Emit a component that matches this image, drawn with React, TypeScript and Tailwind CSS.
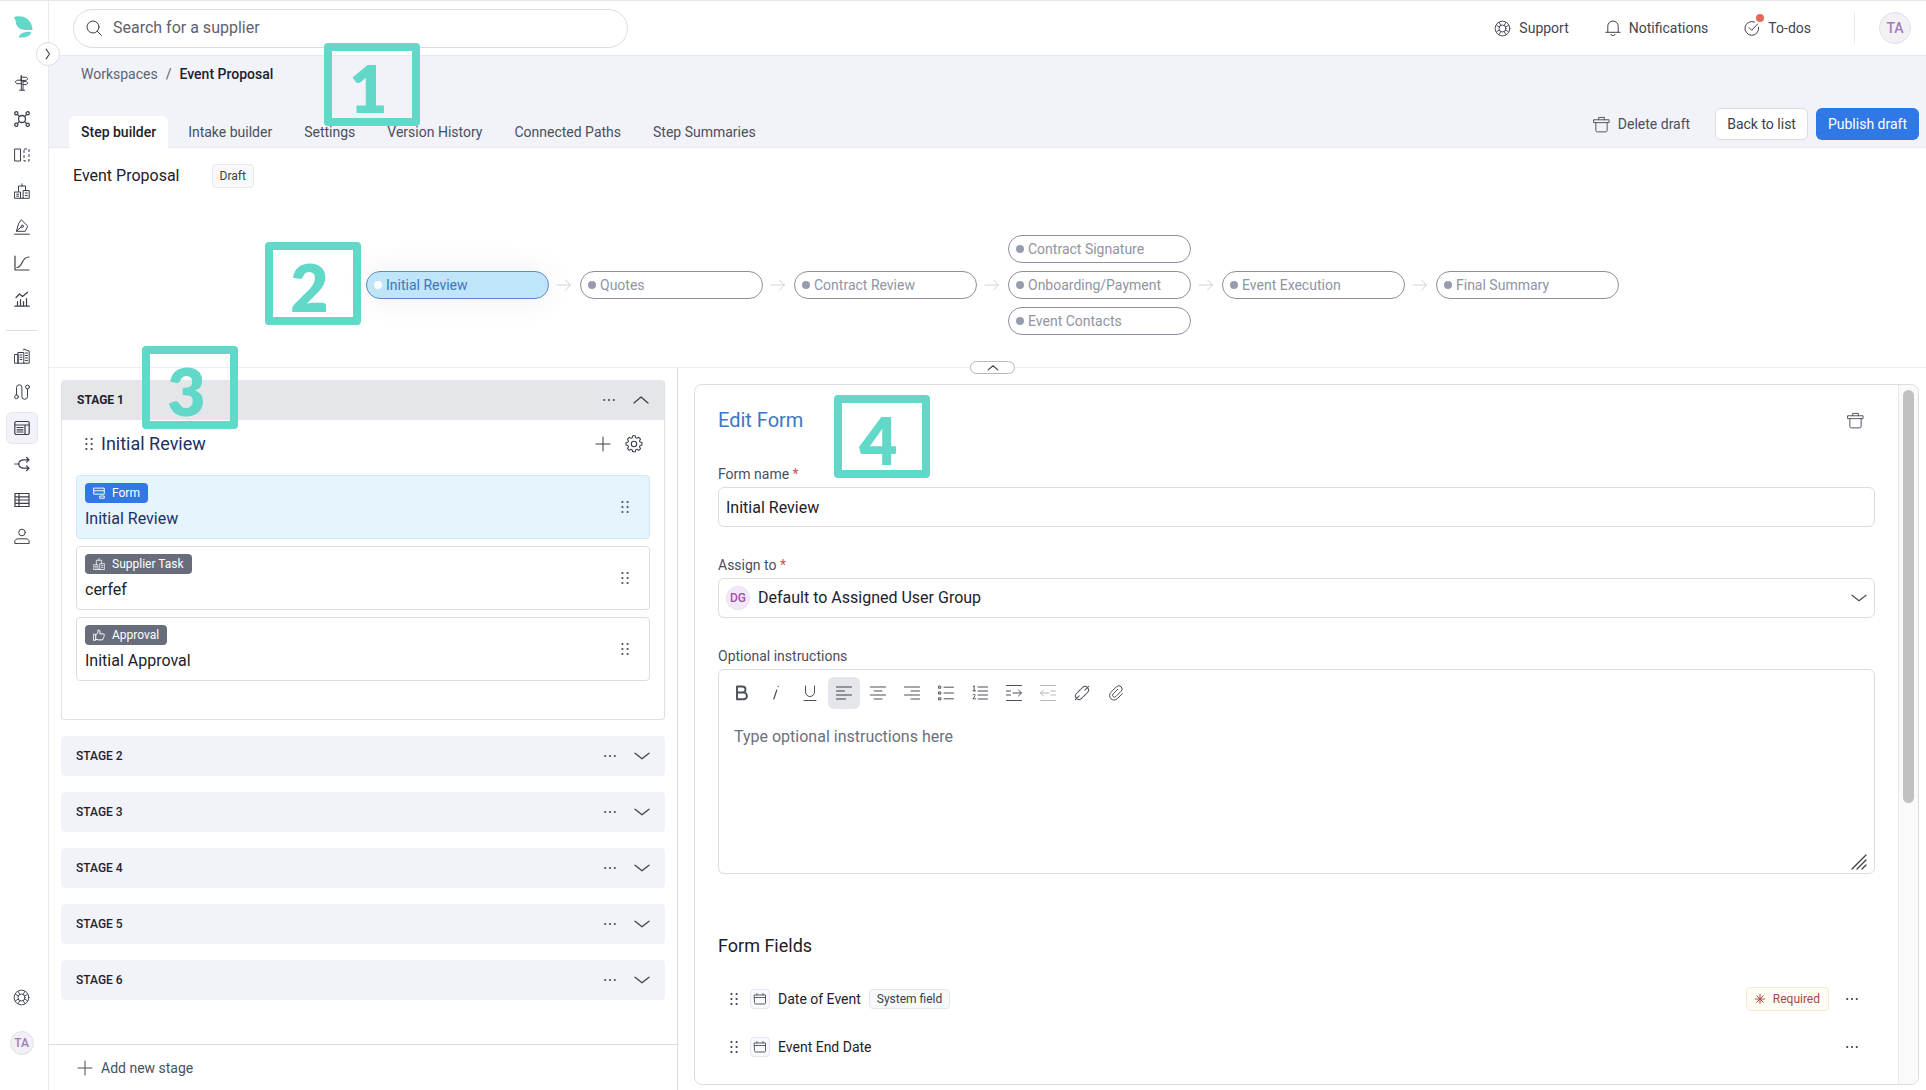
import type { ReactNode } from "react";

type IconProps = { className?: string };

function Svg({ className = "size-4", children, box = "0 0 16 16" }: { className?: string; children: ReactNode; box?: string }) {
  return (
    <svg viewBox={box} className={`shrink-0 ${className}`} fill="none" stroke="currentColor" strokeLinecap="round" strokeLinejoin="round" aria-hidden="true">
      {children}
    </svg>
  );
}

const SearchIcon = () => (
  <Svg>
    <circle cx="7" cy="7" r="6" />
    <path d="M11.4 11.4 15.3 15.3" />
  </Svg>
);
const LifebuoyIcon = () => (
  <Svg className="size-[17px]" box="0 0 18 18">
    <circle cx="9" cy="9" r="7.8" />
    <circle cx="9" cy="9" r="3.7" />
    <path d="M2.8 5.6 5.6 7.4M5.4 2.6 7.2 5.6M12.6 2.6 10.8 5.6M15.2 5.6 12.4 7.4M2.8 12.4 5.6 10.6M5.4 15.4 7.2 12.4M12.6 15.4 10.8 12.4M15.2 12.4 12.4 10.6" />
  </Svg>
);
const BellIcon = () => (
  <Svg>
    <path d="M.8 12.3h14.4M2.8 12.2V6.2a5.2 5.2 0 0 1 10.4 0v6M6 14.4a2.1 2.1 0 0 0 4 0" />
  </Svg>
);
const TodoIcon = () => (
  <Svg>
    <path d="M10.5 2A6.9 6.9 0 1 0 14.6 7M5 7.6l2.7 2.7L13.6 4" />
  </Svg>
);
const TrashIcon = () => (
  <Svg className="size-[17px]" box="0 0 18 18">
    <path d="M1 4h16v3H1zM6 4V1.5h6V4M3 7v8.3c0 .9.6 1.5 1.5 1.5h9c.9 0 1.5-.6 1.5-1.5V7" />
  </Svg>
);
const PlusIcon = () => (
  <Svg>
    <path d="M8 1v14M1 8h14" />
  </Svg>
);
const GearIcon = () => (
  <Svg className="size-[18px]" box="0 0 24 24">
    <path
      strokeWidth="1.5"
      d="M10.2 1.8h3.6l.6 2.7 1.9.8 2.3-1.5 2.6 2.6-1.5 2.3.8 1.9 2.7.6v3.6l-2.7.6-.8 1.9 1.5 2.3-2.6 2.6-2.3-1.5-1.9.8-.6 2.7h-3.6l-.6-2.7-1.9-.8-2.3 1.5-2.6-2.6 1.5-2.3-.8-1.9-2.7-.6v-3.6l2.7-.6.8-1.9-1.5-2.3 2.6-2.6 2.3 1.5 1.9-.8z"
      transform="translate(.6 -.6) scale(.95)"
    />
    <circle cx="12" cy="12" r="3.6" strokeWidth="1.5" />
  </Svg>
);
const GripIcon = () => (
  <svg viewBox="0 0 8 14" className="h-3.5 w-2 shrink-0" fill="currentColor" aria-hidden="true">
    {[2, 7, 12].map((y) => (
      <g key={y}>
        <circle cx="1.4" cy={y} r="1.1" />
        <circle cx="6.6" cy={y} r="1.1" />
      </g>
    ))}
  </svg>
);
const DotsIcon = () => (
  <svg viewBox="0 0 14 4" className="h-1 w-3.5 shrink-0" fill="currentColor" aria-hidden="true">
    <circle cx="2.2" cy="2" r="1.1" />
    <circle cx="7" cy="2" r="1.1" />
    <circle cx="11.8" cy="2" r="1.1" />
  </svg>
);
const ChevronIcon = ({ up = false }: { up?: boolean }) => (
  <Svg>
    <path strokeWidth="1.2" d={up ? "M1 11l7-6 7 6" : "M1 5.200l7 5.600 7-5.600"} />
  </Svg>
);

const SignpostIcon = () => (
  <Svg>
    <path d="M7.3.8v1.4h5l1.5 1.6-1.5 1.6H7.3zM7.3 5.4v1.2M7.3 5.2H3L1.2 7 3 8.7h4.3M7.3 2.2v12.8M9 5.4V15M5.6 15.2h5M9 6.6h3.4l1.4 1.5-1.4 1.5H9" />
  </Svg>
);
const NetworkIcon = () => (
  <Svg>
    <g strokeWidth="1.3">
      <circle cx="8" cy="8" r="3.5" />
      <circle cx="2.3" cy="2.3" r="1.6" />
      <circle cx="13.7" cy="2.3" r="1.6" />
      <circle cx="2.3" cy="13.7" r="1.6" />
      <circle cx="13.7" cy="13.7" r="1.6" />
      <path d="M3.6 3.6l1.8 1.8M12.4 3.6l-1.8 1.8M3.6 12.4l1.8-1.8M12.4 12.4l-1.8-1.8" />
    </g>
  </Svg>
);
const ColumnsIcon = () => (
  <Svg>
    <path d="M1 2h5.5v12H1z" />
    <path strokeLinecap="butt" strokeDasharray="3 2" d="M10 2h5v12h-5z" />
  </Svg>
);
const OfficesIcon = ({ className }: IconProps) => (
  <Svg className={className}>
    <path d="M.8 9h5.7v6.3H.8zM9.5 7.500h5.700v7.800H9.500zM4.500 8.500V3h7v4M8 3V.8M2.600 11.200h2M2.600 13.200h2M11.300 10h2M11.300 12.500h2M6.500 15.300h3" />
  </Svg>
);
const PenIcon = () => (
  <Svg>
    <path d="M7.500 1 13.800 7.200 11.200 12.300H2.400L4.500 5zM2.600 12 7.600 7.700M.6 15.200h14.800" />
    <circle cx="8.300" cy="7.300" r="1.200" />
  </Svg>
);
const CurveIcon = () => (
  <Svg>
    <path strokeWidth="1.200" d="M1 1v14h14M3 12.500c6 0 4-10.500 12-10.500" />
  </Svg>
);
const TrendIcon = () => (
  <Svg>
    <path strokeWidth="1.200" d="M.8 15.200h14.400M3.500 15V10.500M6.500 15V8.500M9.500 15v-4.500M12.500 15V7.500M2 6.500 5.500 3l3 2.500L13.500 1.200" />
  </Svg>
);
const CityIcon = () => (
  <Svg>
    <path d="M.8 6.500h3.400v8.700H.8zM4.200 4.500h5.600v10.700H4.200zM9.800 2v-1l5.400 2.200v12H9.800M6 7h2M6 9.300h2M6 11.600h2M11.500 5h2M11.500 7.500h2M11.500 10h2M11.500 12.500h2" />
  </Svg>
);
const RouteIcon = () => (
  <Svg>
    <circle cx="2.500" cy="12.800" r="1.900" />
    <circle cx="13.500" cy="3" r="1.900" />
    <path d="M2.500 10.800V3.500a2.700 2.700 0 0 1 5.400 0v9a2.700 2.700 0 0 0 5.600 0V5" />
  </Svg>
);
const FormPageIcon = () => (
  <Svg>
    <path
      strokeWidth="1.200"
      d="M2.200 1.500h11.600c.8 0 1.400.6 1.400 1.400v10.200c0 .8-.6 1.400-1.400 1.400H2.200c-.8 0-1.400-.6-1.400-1.400V2.900c0-.8.600-1.400 1.400-1.400zM1 5h14M11 5v9.500M3 7.500h6M3 9.800h6M3 12h6"
    />
  </Svg>
);
const SplitIcon = () => (
  <Svg>
    <path strokeWidth="1.200" d="M.8 8h4M14.800 3.800H10C6.500 3.800 4.800 5.500 4.800 8s1.700 4.200 5.200 4.200h4.800M12.600 1.500 15 3.800l-2.400 2.300M12.600 9.900l2.400 2.300-2.400 2.300" />
  </Svg>
);
const TableIcon = () => (
  <Svg>
    <path strokeWidth="1.200" d="M1 1.500h14v13H1zM1 4.800h14M1 8h14M1 11.300h14M5 1.500v13" />
  </Svg>
);
const PersonIcon = () => (
  <Svg>
    <circle cx="8" cy="4.500" r="3.300" />
    <path d="M.8 15.200v-1.400c0-2 1.600-3 3.400-3h7.600c1.800 0 3.400 1 3.400 3v1.400z" />
  </Svg>
);

const FormBadgeIcon = () => (
  <Svg className="size-3">
    <path strokeWidth="1.3" d="M1 1.500h14v3.500H1zM1 5v4.500h14V5M9.500 12h5.500v3H9.500z" />
  </Svg>
);
const ThumbIcon = () => (
  <Svg className="size-3">
    <path strokeWidth="1.3" d="M1 7h2.600v8H1zM3.600 8.500C6 7 6.600 5 6.600 1.500c2.600-.8 3.600 2 2.400 5h5c1.500 0 1.400 1.700.6 2.200.6.800.3 1.800-.4 2.200.3.800 0 1.600-.7 1.900.1 1-.6 1.700-1.500 1.700H7c-1.300 0-2-.8-3.400-.8" />
  </Svg>
);
const CalendarIcon = () => (
  <Svg className="size-3.5" box="0 0 14 14">
    <path d="M1.500 3h11v8c0 .6-.4 1-1 1h-9c-.6 0-1-.4-1-1zM1.500 5.500h11M4 1.500V3M10 1.500V3" strokeWidth=".9" />
  </Svg>
);
const AsteriskIcon = () => (
  <Svg className="size-2.5" box="0 0 10 10">
    <path d="M5 .5v9M.5 5h9M1.800 1.800l6.400 6.400M8.200 1.800 1.800 8.200" />
  </Svg>
);
const ArrowIcon = () => (
  <Svg className="size-4 text-[#d0d3da]">
    <path d="M1 8h13.500M9.500 3l5 5-5 5" />
  </Svg>
);

const NAV_TOP = [
  { label: "Paths", icon: <SignpostIcon /> },
  { label: "Network", icon: <NetworkIcon /> },
  { label: "Compare", icon: <ColumnsIcon /> },
  { label: "Suppliers", icon: <OfficesIcon /> },
  { label: "Contracts", icon: <PenIcon /> },
  { label: "Performance", icon: <CurveIcon /> },
  { label: "Reports", icon: <TrendIcon /> },
];
const NAV_BOTTOM = [
  { label: "Company", icon: <CityIcon /> },
  { label: "Journeys", icon: <RouteIcon /> },
  { label: "Workspaces", icon: <FormPageIcon />, active: true },
  { label: "Rules", icon: <SplitIcon /> },
  { label: "Tables", icon: <TableIcon /> },
  { label: "Users", icon: <PersonIcon /> },
];

function NavButton({ label, icon, active = false }: { label: string; icon: ReactNode; active?: boolean }) {
  return (
    <button
      type="button"
      aria-label={label}
      className={`flex size-8 items-center justify-center rounded-md border text-[#3a3f4c] ${active ? "border-[#e6e8f0] bg-[#f2f3f8]" : "border-transparent"}`}
    >
      {icon}
    </button>
  );
}

function Sidebar() {
  return (
    <nav aria-label="Main" className="relative flex w-[49px] shrink-0 flex-col border-r border-[#e8e9ee] pr-[5px]">
      <svg viewBox="0 0 20 22" className="mt-[15px] ml-3.5 h-[22px] w-5" fill="#62d8c8" aria-label="Logo">
        <path d="M0 1.200C5-1 17 0 18.500 13c0 .7-.3 1-1 1-7 .4-12-.3-14.500-4C1.500 7.300 2.200 4 0 1.200z" />
        <path d="M17.500 15.800c-1.800 5-6.500 6.200-12.800 5.600C6 17 10 15.600 17.500 15.800z" />
      </svg>
      <button
        type="button"
        aria-label="Expand menu"
        className="absolute top-[41px] -right-3 z-10 flex size-6 items-center justify-center rounded-full border border-[#dcdde2] bg-white text-[#3a3f4c]"
      >
        <Svg className="size-3">
          <path strokeWidth="1.400" d="M5.500 1.500l4.500 6.500-4.500 6.500" />
        </Svg>
      </button>
      <div className="mt-[29px] flex flex-col items-center gap-1">
        {NAV_TOP.map((n) => (
          <NavButton key={n.label} {...n} />
        ))}
      </div>
      <hr className="mx-1.5 mt-[15px] mb-[9px] border-[#dcdde2]" />
      <div className="flex flex-col items-center gap-1">
        {NAV_BOTTOM.map((n) => (
          <NavButton key={n.label} {...n} />
        ))}
      </div>
      <div className="mt-auto mb-[35px] flex flex-col items-center gap-[18px]">
        <NavButton label="Help" icon={<LifebuoyIcon />} />
        <span className="flex size-6 items-center justify-center rounded-full border border-[#e3e0e8] bg-[#f1f0f4] text-xs font-medium text-[#a07cb5]">TA</span>
      </div>
    </nav>
  );
}

function Callout({ n, className }: { n: number; className: string }) {
  return (
    <div
      className={`pointer-events-none absolute z-20 flex h-[83px] w-24 items-center justify-center rounded border-8 border-[#62d8c8] pt-[7px] pr-[7px] font-[Lato,sans-serif] text-[66px] leading-none font-extrabold text-[#62d8c8] ${className}`}
    >
      {n}
    </div>
  );
}

function TopBar() {
  return (
    <header className="flex h-[55px] items-center justify-between border-b border-[#e8e9ee] pr-[15px] pl-6">
      <label className="flex h-[39px] w-[555px] items-center gap-[11px] rounded-full border border-[#dcdde2] px-3 text-[#3a3f4c]">
        <SearchIcon />
        <input type="search" aria-label="Search for a supplier" placeholder="Search for a supplier" className="min-w-0 flex-1 bg-transparent text-base outline-none placeholder:text-[#5d6270]" />
      </label>
      <div className="flex items-center text-sm text-[#3f4451]">
        <div className="flex items-center gap-9">
          <button type="button" className="flex items-center gap-2">
            <LifebuoyIcon />
            Support
          </button>
          <button type="button" className="flex items-center gap-2">
            <BellIcon />
            Notifications
          </button>
          <button type="button" className="flex items-center gap-2">
            <span className="relative">
              <TodoIcon />
              <span className="absolute -top-1.5 -right-1 size-2 rounded-full bg-[#e8695c]" />
            </span>
            To-dos
          </button>
        </div>
        <span className="mr-6 ml-[43px] h-8 w-px bg-[#e8e9ee]" />
        <span className="flex size-8 items-center justify-center rounded-full border border-[#e3e0e8] bg-[#f4f1f6] font-medium text-[#a07cb5]">TA</span>
      </div>
    </header>
  );
}

const TABS = ["Step builder", "Intake builder", "Settings", "Version History", "Connected Paths", "Step Summaries"];

function PageHeader() {
  return (
    <div className="relative flex justify-between border-b border-[#e8e9ee] bg-[#f2f3f8] pr-[7px] pl-5 text-sm">
      <div>
        <nav aria-label="Breadcrumb" className="flex gap-2 px-3 pt-2 text-[#5d6270]">
          <a href="#workspaces">Workspaces</a>
          <span>/</span>
          <span className="font-medium text-[#1d212b]">Event Proposal</span>
        </nav>
        <div role="tablist" className="-mb-px mt-8 flex gap-2">
          {TABS.map((t, i) => (
            <button
              key={t}
              type="button"
              role="tab"
              aria-selected={i === 0}
              className={`h-8 rounded-t-md px-3 ${i === 0 ? "bg-white font-medium text-[#1d212b]" : "text-[#4a4f5c]"}`}
            >
              {t}
            </button>
          ))}
        </div>
      </div>
      <div className="mb-[7px] flex items-center gap-2 self-end">
        <button type="button" className="mr-[17px] flex items-center gap-2 text-[#4a4f5c]">
          <TrashIcon />
          Delete draft
        </button>
        <button type="button" className="h-8 rounded-md border border-[#dcdde2] bg-white px-[11px] text-[#3a3f4c]">
          Back to list
        </button>
        <button type="button" className="h-8 rounded-md bg-[#2f78e6] px-3 text-white">
          Publish draft
        </button>
      </div>
      <Callout n={1} className="top-[-13px] left-[275px]" />
    </div>
  );
}

const FLOW = [["Initial Review"], ["Quotes"], ["Contract Review"], ["Contract Signature", "Onboarding/Payment", "Event Contacts"], ["Event Execution"], ["Final Summary"]];

function Flow() {
  return (
    <section aria-label="Stages overview" className="relative border-b border-[#efeff3]">
      <div className="flex items-center gap-8 pt-4 pl-6">
        <h1 className="text-base text-[#1d212b]">Event Proposal</h1>
        <span className="rounded border border-[#e8e9ee] bg-[#f8f9fb] px-[7px] py-[3px] text-xs text-[#3a3f4c]">Draft</span>
      </div>
      <ol className="flex items-center justify-center gap-2 pt-[47px] pb-8 pl-[10px]">
        {FLOW.map((col, i) => (
          <li key={col[0]} className="flex items-center gap-[7px]">
            <div className="relative flex flex-col gap-2">
              {col.map((label) => (
                <button
                  key={label}
                  type="button"
                  className={`flex h-7 w-[183px] items-center gap-1 rounded-full border px-[7px] text-sm ${
                    i === 0 ? "border-[#5a8dc8] bg-[#c0e4f8] text-[#3a78bd] shadow-[0_0_32px_rgba(0,0,0,0.07)]" : "border-[#8b909d] bg-white text-[#8f95a3]"
                  }`}
                >
                  <span className={`size-2 rounded-full ${i === 0 ? "bg-white" : "bg-[#979dae]"}`} />
                  {label}
                </button>
              ))}
              {i === 0 && <Callout n={2} className="-top-[29px] -left-[101px]" />}
            </div>
            {i < FLOW.length - 1 && <ArrowIcon />}
          </li>
        ))}
      </ol>
      <div className="absolute inset-x-0 -bottom-[7px] flex justify-center pl-[10px]">
        <button type="button" aria-label="Collapse overview" className="flex h-[13px] w-[45px] items-center justify-center rounded-full border border-[#b5b8c0] bg-white text-[#3a3f4c]">
          <Svg className="size-3">
            <path strokeWidth="1.500" d="M1.500 10.500 8 5l6.500 5.500" />
          </Svg>
        </button>
      </div>
    </section>
  );
}

const STEPS = [
  { kind: "Form", name: "Initial Review", icon: <FormBadgeIcon />, active: true },
  { kind: "Supplier Task", name: "cerfef", icon: <OfficesIcon className="size-3" />, active: false },
  { kind: "Approval", name: "Initial Approval", icon: <ThumbIcon />, active: false },
];

function StageHeader({ n, open = false }: { n: number; open?: boolean }) {
  return (
    <div className={`flex h-10 items-center px-[15px] text-xs text-[#1d212b] ${open ? "rounded-t bg-[#e5e6ea] font-bold" : "rounded bg-[#f2f3f8] font-medium"}`}>
      <h2 className="flex-1">STAGE {n}</h2>
      <button type="button" aria-label={`Stage ${n} options`} className="mr-[17px] flex h-6 items-center text-[#4a4f5c]">
        <DotsIcon />
      </button>
      <button type="button" aria-label={`Toggle stage ${n}`} aria-expanded={open} className="flex h-6 items-center text-[#3a3f4c]">
        <ChevronIcon up={open} />
      </button>
    </div>
  );
}

function StagePanel() {
  return (
    <aside className="flex w-[629px] shrink-0 flex-col border-r border-[#dcdde2]">
      <div className="flex flex-1 flex-col gap-4 pt-3 pr-3 pl-3">
        <section className="relative rounded border border-t-0 border-[#e0e1e6]">
          <StageHeader n={1} open />
          <div className="flex items-center gap-2 px-[15px] pt-2.5 pl-[23px] text-[#3a3f4c]">
            <GripIcon />
            <h3 className="flex-1 text-lg text-[#22305f]">Initial Review</h3>
            <button type="button" aria-label="Add step" className="mr-1.5">
              <PlusIcon />
            </button>
            <button type="button" aria-label="Stage settings" className="mr-1.5">
              <GearIcon />
            </button>
          </div>
          <ul className="flex flex-col gap-[7px] px-[14px] pt-[17px] pb-[38px]">
            {STEPS.map((s) => (
              <li key={s.name} className={`flex h-16 items-center justify-between rounded border pr-5 pl-2 ${s.active ? "border-[#cfe8f5] bg-[#e6f4fd]" : "border-[#dcdde2] bg-white"}`}>
                <div className="flex flex-col items-start">
                  <span className={`flex h-5 items-center gap-[7px] rounded px-2 text-xs text-white ${s.active ? "bg-[#2f78e6]" : "bg-[#686d7c]"}`}>
                    {s.icon}
                    {s.kind}
                  </span>
                  <span className={`mt-1 text-base ${s.active ? "text-[#22305f]" : "text-[#1d212b]"}`}>{s.name}</span>
                </div>
                <span className="text-[#4a4f5c]">
                  <GripIcon />
                </span>
              </li>
            ))}
          </ul>
          <Callout n={3} className="-top-[34px] left-[80px]" />
        </section>
        {[2, 3, 4, 5, 6].map((n) => (
          <StageHeader key={n} n={n} />
        ))}
      </div>
      <div className="flex h-[46px] items-center border-t border-[#dcdde2] px-7">
        <button type="button" className="flex items-center gap-2 text-sm text-[#4a4f5c]">
          <PlusIcon />
          Add new stage
        </button>
      </div>
    </aside>
  );
}

const lines = (d: string) => (
  <Svg>
    <path d={d} />
  </Svg>
);
const TOOLS: { label: string; icon: ReactNode; state?: "on" | "off" }[] = [
  {
    label: "Bold",
    icon: (
      <Svg>
        <path strokeWidth="1.900" d="M3 1.500h5.500a3 3 0 0 1 0 6H3zM3 7.500h6.500a3.400 3.400 0 0 1 0 6.800H3z" />
      </Svg>
    ),
  },
  {
    label: "Italic",
    icon: (
      <Svg>
        <path d="M8.800 5 5.800 14M10.200 1.300v.3" strokeWidth="1.200" />
      </Svg>
    ),
  },
  { label: "Underline", icon: lines("M3.500 1v6a4.500 4.500 0 0 0 9 0V1M2 15.500h12") },
  { label: "Align left", icon: lines("M.5 2h15M.5 6h8M.5 10h15M.5 14h9"), state: "on" },
  { label: "Align center", icon: lines("M.5 2h15M4 6h8M.5 10h15M4 14h8") },
  { label: "Align right", icon: lines("M.5 2h15M7 6h8.500M.5 10h15M7 14h8.500") },
  { label: "Bulleted list", icon: lines("M6 2.200h9.500M6 8h9.500M6 13.800h9.500M.8 1.200h2v2h-2zM.8 7h2v2h-2zM.8 12.800h2v2h-2z") },
  { label: "Numbered list", icon: lines("M6 2h9.500M6 6h9.500M6 10h9.500M6 14h9.500M1.200 1.500l1-.7v5M1 5.800h2.400M1 9.800c1.200-1 2.400-.2 2 .9L1 13.800h2.500") },
  { label: "Increase indent", icon: lines("M.5 .5h15M.5 15.500h15M.5 6h4M.5 10h4M7 8h8.500M12.500 5l3 3-3 3") },
  { label: "Decrease indent", icon: lines("M.5 .5h15M.5 15.500h15M11 6h4.500M11 10h4.500M.5 8H9M3.500 5l-3 3 3 3"), state: "off" },
  {
    label: "Link",
    icon: (
      <Svg>
        <g transform="rotate(-45 8 8)">
          <path d="M9.500 4.500H3.800a3.500 3.500 0 0 0 0 7h1.700M6.500 11.500h5.700a3.500 3.500 0 0 0 0-7h-1.700M-1.500 8H4M12 8h5.500" />
        </g>
      </Svg>
    ),
  },
  { label: "Attach", icon: lines("M14.500 8.500 9.300 13.700a4.500 4.500 0 0 1-6.400-6.400l5.600-5.600a3.200 3.200 0 0 1 4.600 4.600L7.800 11.600a1.900 1.900 0 0 1-2.700-2.700L9.700 4.300") },
];

function FieldRow({ name, system = false, required = false }: { name: string; system?: boolean; required?: boolean }) {
  return (
    <li className="flex h-12 items-center pr-4 pl-3 text-sm text-[#1d212b]">
      <span className="mr-3 text-[#3a3f4c]">
        <GripIcon />
      </span>
      <span className="mr-2 flex size-5 items-center justify-center rounded border border-[#e3e6ee] bg-[#f8f9fb] text-[#4a4f5c]">
        <CalendarIcon />
      </span>
      {name}
      {system && <span className="ml-2 rounded border border-[#e3e6ee] bg-[#f8f9fb] px-[7px] py-px text-xs text-[#3a3f4c]">System field</span>}
      <span className="flex-1" />
      {required && (
        <span className="mr-4 flex h-6 items-center gap-2 rounded border border-[#f8ead6] bg-[#fffbf5] px-2 text-xs text-[#a34a44]">
          <AsteriskIcon />
          Required
        </span>
      )}
      <button type="button" aria-label={`${name} options`} className="flex h-6 items-center text-[#3a3f4c]">
        <DotsIcon />
      </button>
    </li>
  );
}

function EditForm() {
  return (
    <main className="mt-4 mr-[7px] mb-[5px] ml-4 flex min-w-0 flex-1 overflow-hidden rounded-lg border border-[#dcdde2]">
      <form className="relative min-w-0 flex-1 pt-[19px] pr-[23px] pl-[23px] text-sm text-[#4a4f5c]">
        <div className="flex items-center justify-between pr-[11px]">
          <h2 className="text-xl leading-8 text-[#3a78c4]">Edit Form</h2>
          <button type="button" aria-label="Delete form">
            <TrashIcon />
          </button>
        </div>
        <label htmlFor="form-name" className="mt-7 block">
          Form name <span className="text-[#c9574e]">*</span>
        </label>
        <input id="form-name" defaultValue="Initial Review" className="mt-[3px] block h-10 w-full rounded-md border border-[#dcdde2] px-[7px] text-base text-[#1d212b]" />
        <label htmlFor="assign-to" className="mt-7 block">
          Assign to <span className="text-[#c9574e]">*</span>
        </label>
        <div className="relative mt-[3px]">
          <select id="assign-to" className="block h-10 w-full appearance-none rounded-md border border-[#dcdde2] bg-transparent pr-10 pl-[39px] text-base text-[#1d212b]">
            <option>Default to Assigned User Group</option>
          </select>
          <span className="pointer-events-none absolute inset-y-2 left-2 flex size-6 items-center justify-center rounded-full border border-[#eadff0] bg-[#f3e8f8] text-xs font-medium text-[#a04fa8]">DG</span>
          <span className="pointer-events-none absolute inset-y-3 right-2">
            <ChevronIcon />
          </span>
        </div>
        <label htmlFor="instructions" className="mt-7 block">
          Optional instructions
        </label>
        <div className="relative mt-[3px] rounded-md border border-[#dcdde2]">
          <div role="toolbar" aria-label="Formatting" className="flex gap-0.5 px-[7px] pt-[7px]">
            {TOOLS.map((t) => (
              <button
                key={t.label}
                type="button"
                aria-label={t.label}
                className={`flex size-8 items-center justify-center rounded-md ${t.state === "on" ? "bg-[#e5e6ea] text-[#3a3f4c]" : t.state === "off" ? "text-[#b5b8c0]" : "text-[#4a4f5c]"}`}
              >
                {t.icon}
              </button>
            ))}
          </div>
          <textarea
            id="instructions"
            placeholder="Type optional instructions here"
            className="block h-[164px] w-full resize-none bg-transparent px-[15px] py-4 text-base text-[#1d212b] outline-none placeholder:text-[#6b707e]"
          />
          <span className="pointer-events-none absolute right-[7px] bottom-[3px] text-[#3a3f4c]">
            <Svg>
              <path d="M1 15 15 1M6 15l9-9M11 15l4-4" strokeWidth="1.300" />
            </Svg>
          </span>
        </div>
        <h3 className="mt-[58px] text-lg text-[#1d212b]">Form Fields</h3>
        <ul className="mt-[15px]">
          <FieldRow name="Date of Event" system required />
          <FieldRow name="Event End Date" />
        </ul>
        <Callout n={4} className="top-[10px] left-[139px]" />
      </form>
      <div className="w-5 shrink-0 border-l border-[#e8e9ee] bg-[#fafafa] px-1 py-[5px]">
        <div className="h-3/5 rounded-full bg-[#c1c1c1]" />
      </div>
    </main>
  );
}

export default function App() {
  return (
    <div className="flex min-h-screen border-t border-[#ede6e2] bg-white font-[Roboto,sans-serif]">
      <Sidebar />
      <div className="flex min-w-0 flex-1 flex-col">
        <TopBar />
        <PageHeader />
        <Flow />
        <div className="flex flex-1">
          <StagePanel />
          <EditForm />
        </div>
      </div>
    </div>
  );
}
